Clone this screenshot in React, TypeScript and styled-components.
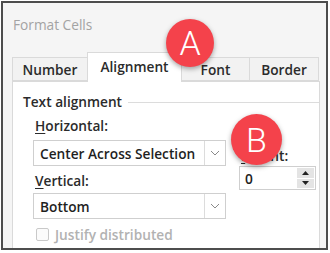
import React from 'react';
import styled, { createGlobalStyle } from 'styled-components';

const GlobalStyle = createGlobalStyle`
  html, body {
    margin: 0;
    padding: 0;
    background: #ffffff;
  }
  body {
    font-family: 'Open Sans', 'Noto Sans', 'Liberation Sans', sans-serif;
  }
`;

const Frame = styled.div`
  position: relative;
  box-sizing: border-box;
  width: 327px;
  height: 249px;
  margin: 1px 0 0 1px;
  border: 2px solid #4d4d4d;
  background: #f5f5f5;
  padding: 0 6px 0 9px;
  overflow: hidden;
  display: flex;
  flex-direction: column;
`;

const Title = styled.div`
  height: 49px;
  box-sizing: border-box;
  padding: 13px 0 0 1px;
  font-size: 13.7px;
  line-height: 18px;
  color: #a3a3a3;
`;

const TabRow = styled.div`
  display: flex;
  align-items: flex-end;
  height: 29px;
  position: relative;
  z-index: 1;
`;

const Tab = styled.div<{ $active?: boolean; $w: number }>`
  box-sizing: border-box;
  width: ${({ $w }) => $w}px;
  height: ${({ $active }) => ($active ? '30px' : '24px')};
  margin-bottom: ${({ $active }) => ($active ? '-1px' : '0')};
  background: ${({ $active }) => ($active ? '#ffffff' : '#f2f2f2')};
  border: 1px solid #dadada;
  border-bottom: ${({ $active }) => ($active ? 'none' : '1px solid #dadada')};
  margin-left: -1px;
  display: flex;
  align-items: center;
  justify-content: center;
  padding-bottom: ${({ $active }) => ($active ? '2px' : '0')};
  font-size: 13.7px;
  font-weight: 600;
  color: #2b2b2b;

  &:first-child {
    margin-left: 0;
  }
`;

const Panel = styled.div`
  flex: 1;
  background: #ffffff;
  border: 1px solid #dadada;
  border-bottom: none;
  padding: 12px 0 0 10px;
`;

const GroupHead = styled.div`
  display: flex;
  align-items: center;
  gap: 6px;
  font-size: 13.7px;
  font-weight: 600;
  line-height: 16px;
  color: #2b2b2b;

  &::after {
    content: '';
    flex: 1;
    height: 1px;
    background: #dcdcdc;
  }
`;

const GroupBody = styled.div`
  display: flex;
  padding-left: 10px;
  gap: 13px;
`;

const LeftCol = styled.div`
  width: 193px;
  flex: none;
  display: flex;
  flex-direction: column;
`;

const RightCol = styled.div`
  width: 77px;
  display: flex;
  flex-direction: column;
  padding-top: 38px;
`;

const Label = styled.div<{ $top: number }>`
  margin-top: ${({ $top }) => $top}px;
  padding-left: 2px;
  font-size: 13.7px;
  font-weight: 600;
  line-height: 16px;
  color: #2b2b2b;
  white-space: nowrap;

  u {
    text-decoration-thickness: 1px;
    text-underline-offset: 2px;
  }
`;

const Select = styled.div<{ $top: number }>`
  margin-top: ${({ $top }) => $top}px;
  box-sizing: border-box;
  height: 26px;
  border: 1px solid #cfcfcf;
  background: #ffffff;
  display: flex;
  align-items: stretch;
`;

const SelectValue = styled.div`
  flex: 1;
  display: flex;
  align-items: center;
  padding-left: 6px;
  font-size: 13.7px;
  font-weight: 600;
  color: #1f1f1f;
  white-space: nowrap;
`;

const DropButton = styled.div`
  width: 20px;
  border-left: 1px solid #dcdcdc;
  display: flex;
  align-items: center;
  justify-content: center;
`;

const CheckRow = styled.div`
  margin-top: 6px;
  display: flex;
  align-items: center;
  gap: 6px;
  padding-left: 3px;
  font-size: 13.7px;
  font-weight: 600;
  color: #b2b2b2;
  white-space: nowrap;
`;

const CheckBox = styled.div`
  box-sizing: border-box;
  width: 13px;
  height: 13px;
  border: 1px solid #c9c9c9;
  border-radius: 2px;
  background: #fbfbfb;
`;

const Spin = styled.div`
  margin-top: 2px;
  box-sizing: border-box;
  width: 77px;
  height: 24px;
  border: 1px solid #cfcfcf;
  background: #ffffff;
  display: flex;
  padding: 1px 1px 1px 0;
`;

const SpinValue = styled.div`
  flex: 1;
  display: flex;
  align-items: center;
  padding-left: 5px;
  font-size: 13.7px;
  font-weight: 600;
  color: #222;
`;

const SpinButtons = styled.div`
  width: 17px;
  display: flex;
  flex-direction: column;
  gap: 1px;
`;

const SpinButton = styled.div`
  flex: 1;
  background: #e4e4e4;
  display: flex;
  align-items: center;
  justify-content: center;
`;

const Badge = styled.div<{ $x: number; $y: number; $size: number }>`
  position: absolute;
  left: ${({ $x }) => $x}px;
  top: ${({ $y }) => $y}px;
  width: ${({ $size }) => $size}px;
  height: ${({ $size }) => $size}px;
  border-radius: 50%;
  background: #f4424b;
  box-shadow: 0 2px 5px rgba(0, 0, 0, 0.35);
  color: #ffffff;
  font-family: Roboto, 'Open Sans', sans-serif;
  font-size: 34px;
  font-weight: 300;
  display: flex;
  align-items: center;
  justify-content: center;
  z-index: 5;
`;

const Chevron = () => (
  <svg width="10" height="6" viewBox="0 0 10 6">
    <path d="M1 1 L5 5 L9 1" fill="none" stroke="#8a8a8a" strokeWidth="1" />
  </svg>
);

const Arrow = ({ up }: { up?: boolean }) => (
  <svg width="7" height="4" viewBox="0 0 7 4">
    <path d={up ? 'M0 4 L3.5 0 L7 4 Z' : 'M0 0 L3.5 4 L7 0 Z'} fill="#222" />
  </svg>
);

export default function App() {
  return (
    <>
      <GlobalStyle />
      <Frame>
        <Title>Format Cells</Title>
        <TabRow>
          <Tab $w={76}>Number</Tab>
          <Tab $w={95} $active>Alignment</Tab>
          <Tab $w={69}>Font</Tab>
          <Tab $w={70}>Border</Tab>
        </TabRow>
        <Panel>
          <GroupHead>Text alignment</GroupHead>
          <GroupBody>
            <LeftCol>
              <Label $top={8}>
                <u>H</u>orizontal:
              </Label>
              <Select $top={6}>
                <SelectValue>Center Across Selection</SelectValue>
                <DropButton>
                  <Chevron />
                </DropButton>
              </Select>
              <Label $top={7}>
                <u>V</u>ertical:
              </Label>
              <Select $top={4}>
                <SelectValue>Bottom</SelectValue>
                <DropButton>
                  <Chevron />
                </DropButton>
              </Select>
              <CheckRow>
                <CheckBox />
                Justify distributed
              </CheckRow>
            </LeftCol>
            <RightCol>
              <Label $top={0}>
                <u>I</u>ndent:
              </Label>
              <Spin>
                <SpinValue>0</SpinValue>
                <SpinButtons>
                  <SpinButton>
                    <Arrow up />
                  </SpinButton>
                  <SpinButton>
                    <Arrow />
                  </SpinButton>
                </SpinButtons>
              </Spin>
            </RightCol>
          </GroupBody>
        </Panel>
        <Badge $x={163} $y={16} $size={48}>A</Badge>
        <Badge $x={228} $y={111} $size={51}>B</Badge>
      </Frame>
    </>
  );
}
